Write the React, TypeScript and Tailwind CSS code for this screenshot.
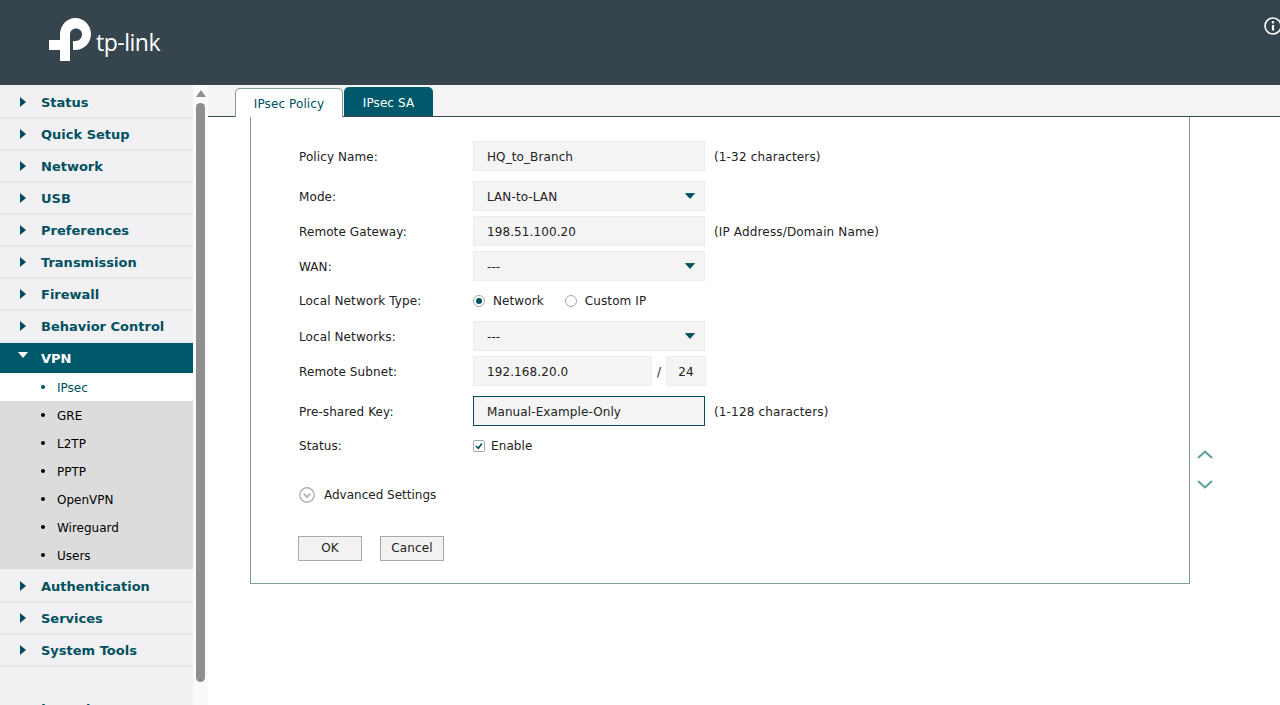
const navTop = ["Status", "Quick Setup", "Network", "USB", "Preferences", "Transmission", "Firewall", "Behavior Control"];
const navSub = ["GRE", "L2TP", "PPTP", "OpenVPN", "Wireguard", "Users"];
const navBottom = ["Authentication", "Services", "System Tools"];

const Logo = () => (
  <div className="flex items-center ml-[49px]">
    <svg width="43" height="44" viewBox="0 0 43 44" className="shrink-0 mt-[-5px]">
      <path
        fill="#fff"
        fillRule="evenodd"
        d="M11 22V16.5C11 7.4 18 0 26.5 0C35 0 42 7.4 42 16C42 25 35 32 26 32H24V23H26.5C30.5 23 33 20 33 16.5C33 13 30.5 10.5 27 10.5C23.5 10.5 21 13 21 16.5V43H11V32H0V22Z"
      />
    </svg>
    <span className="font-['Open_Sans',sans-serif] text-[23px] leading-none text-white ml-[4px] mt-[-1px] tracking-[-0.5px]">tp-link</span>
  </div>
);

const NavRow = ({ label }: { label: string }) => (
  <div className="h-8 border-b-2 border-[#e9e9ec] flex items-center">
    <svg width="6" height="10" viewBox="0 0 6 10" className="ml-[20px] mr-[15px]">
      <path d="M0 0L6 5L0 10Z" fill="#00505f" />
    </svg>
    <span className="font-bold text-[13px] text-[#00505f] pt-[2px]">{label}</span>
  </div>
);

const SubRow = ({ label, active }: { label: string; active?: boolean }) => (
  <div className={`h-7 flex items-center text-[12px] ${active ? "bg-white text-[#00505f]" : "text-black"}`}>
    <span className={`w-1 h-1 rounded-full ml-[41px] mr-3 ${active ? "bg-[#00505f]" : "bg-black"}`} />
    <span className="pt-[2px]">{label}</span>
  </div>
);

const Sidebar = () => (
  <aside className="w-[193px] shrink-0 bg-[#f1f1f4] pt-[2px] overflow-hidden font-['DejaVu_Sans',sans-serif]">
    {navTop.map((n) => (
      <NavRow key={n} label={n} />
    ))}
    <div className="h-[30px] bg-[#00596b] flex items-center">
      <svg width="10" height="6" viewBox="0 0 10 6" className="ml-[18px] mr-[13px] mb-[6px]">
        <path d="M0 0H10L5 6Z" fill="#fff" />
      </svg>
      <span className="font-bold text-[13px] text-white pt-[2px]">VPN</span>
    </div>
    <SubRow label="IPsec" active />
    <div className="bg-[#dcdcdc] mb-[2px]">
      {navSub.map((n) => (
        <SubRow key={n} label={n} />
      ))}
    </div>
    {navBottom.map((n) => (
      <NavRow key={n} label={n} />
    ))}
    <div className="mt-[32px] pl-[41px] font-bold text-[13px] text-[#00505f]">Logout</div>
  </aside>
);

const Scrollbar = () => (
  <div className="w-[15px] shrink-0 bg-[#fafafa] flex flex-col items-center">
    <svg width="10" height="7" viewBox="0 0 10 7" className="mt-[5px] mb-[6px]">
      <path d="M0 7L5 0L10 7Z" fill="#8f8f8f" />
    </svg>
    <div className="w-[9px] h-[579px] rounded-full bg-[#8f8f8f]" />
  </div>
);

const Label = ({ children }: { children: string }) => <div className="w-[174px] shrink-0 pt-[2px]">{children}</div>;

const Field = ({ value, className = "w-[232px]" }: { value: string; className?: string }) => (
  <div className={`h-[30px] bg-[#f4f4f4] border border-[#ececec] flex items-center pl-[13px] ${className}`}>
    <span className="pt-[2px]">{value}</span>
  </div>
);

const Select = ({ value }: { value: string }) => (
  <div className="w-[232px] h-[30px] bg-[#f4f4f4] border border-[#ececec] flex items-center justify-between pl-[13px] pr-[9px]">
    <span className="pt-[2px]">{value}</span>
    <svg width="10" height="6" viewBox="0 0 10 6">
      <path d="M0.5 0.5H9.5L5 5.5Z" fill="#00505f" stroke="#00505f" strokeWidth="0.8" strokeLinejoin="round" />
    </svg>
  </div>
);

const Hint = ({ children }: { children: string }) => <span className="ml-[9px] pt-[2px] tracking-[0.15px]">{children}</span>;

const Radio = ({ checked }: { checked?: boolean }) => (
  <span className={`w-3 h-3 rounded-full border flex items-center justify-center ${checked ? "border-[#9aa9ad]" : "border-[#a8a8a8]"}`}>
    {checked && <span className="w-[6px] h-[6px] rounded-full bg-[#00505f]" />}
  </span>
);

const Form = () => (
  <div className="w-[940px] h-[467px] border border-t-0 border-[#7f9ca3] pl-[48px] pt-[24px] text-[12px] tracking-[0.1px] text-[#222] font-['DejaVu_Sans',sans-serif]">
    <div className="flex items-center">
      <Label>Policy Name:</Label>
      <Field value="HQ_to_Branch" />
      <Hint>(1-32 characters)</Hint>
    </div>
    <div className="flex items-center mt-[10px]">
      <Label>Mode:</Label>
      <Select value="LAN-to-LAN" />
    </div>
    <div className="flex items-center mt-[5px]">
      <Label>Remote Gateway:</Label>
      <Field value="198.51.100.20" />
      <Hint>(IP Address/Domain Name)</Hint>
    </div>
    <div className="flex items-center mt-[5px]">
      <Label>WAN:</Label>
      <Select value="---" />
    </div>
    <div className="flex items-center h-[30px] mt-[5px]">
      <div className="w-[174px] shrink-0">Local Network Type:</div>
      <Radio checked />
      <span className="ml-[8px]">Network</span>
      <span className="ml-[21px]">
        <Radio />
      </span>
      <span className="ml-[8px]">Custom IP</span>
    </div>
    <div className="flex items-center mt-[5px]">
      <Label>Local Networks:</Label>
      <Select value="---" />
    </div>
    <div className="flex items-center mt-[5px]">
      <Label>Remote Subnet:</Label>
      <Field value="192.168.20.0" className="w-[179px]" />
      <span className="w-[14px] text-center pt-[2px]">/</span>
      <div className="w-[40px] h-[30px] bg-[#f4f4f4] border border-[#ececec] flex items-center justify-center pt-[2px]">24</div>
    </div>
    <div className="flex items-center mt-[10px]">
      <Label>Pre-shared Key:</Label>
      <Field value="Manual-Example-Only" className="w-[232px] !border-[#00505f]" />
      <Hint>(1-128 characters)</Hint>
    </div>
    <div className="flex items-center mt-[10px] h-[20px]">
      <div className="w-[174px] shrink-0">Status:</div>
      <span className="w-3 h-3 border border-[#9aa9ad] rounded-[2px] flex items-center justify-center">
        <svg width="8" height="8" viewBox="0 0 8 8">
          <path d="M1 4L3.2 6.2L7 1.5" stroke="#00505f" strokeWidth="1.6" fill="none" />
        </svg>
      </span>
      <span className="ml-[6px]">Enable</span>
    </div>
    <div className="flex items-center mt-[29px]">
      <svg width="16" height="16" viewBox="0 0 16 16">
        <circle cx="8" cy="8" r="7.2" fill="none" stroke="#b0b0b0" strokeWidth="1.4" />
        <path d="M4.8 6.8L8 10L11.2 6.8" fill="none" stroke="#b8b8b8" strokeWidth="2" />
      </svg>
      <span className="ml-[9px] pt-[1px] tracking-normal">Advanced Settings</span>
    </div>
    <div className="flex mt-[32px] gap-[18px] ml-[-1px]">
      <button className="w-[64px] h-[25px] bg-[#f2f2f2] border border-[#a9a9a9] text-[12px] text-[#222] pb-[2px]">OK</button>
      <button className="w-[64px] h-[25px] bg-[#f2f2f2] border border-[#a9a9a9] text-[12px] text-[#222] pb-[2px]">Cancel</button>
    </div>
  </div>
);

const Tabs = () => (
  <div className="h-8 bg-[#f4f4f4] border-b border-[#37474f] flex items-end pl-[27px] gap-[1px] font-['DejaVu_Sans',sans-serif] text-[12px] tracking-[0.1px]">
    <div className="w-[108px] h-[29px] bg-white border border-b-0 border-[#7f9ca3] rounded-t-[5px] flex items-center justify-center text-[#00505f] mb-[-1px] pt-[2px]">IPsec Policy</div>
    <div className="w-[89px] h-[29px] bg-[#00596b] rounded-t-[5px] flex items-center justify-center text-white pt-[2px]">IPsec SA</div>
  </div>
);

export default function App() {
  return (
    <div className="w-[1280px] h-[705px] overflow-hidden flex flex-col bg-white">
      <header className="h-[85px] shrink-0 bg-[#36454d] flex items-center justify-between">
        <Logo />
        <svg width="18" height="18" viewBox="0 0 18 18" className="mr-[-2px] mb-[33px]">
          <circle cx="9" cy="9" r="8" fill="none" stroke="#fff" strokeWidth="1.6" />
          <circle cx="9" cy="5.2" r="1.2" fill="#fff" />
          <path d="M9 8V13.5" stroke="#fff" strokeWidth="2.2" />
        </svg>
      </header>
      <div className="flex-1 flex min-h-0">
        <Sidebar />
        <Scrollbar />
        <main className="flex-1 min-w-0">
          <Tabs />
          <div className="flex">
            <div className="ml-[42px]">
              <Form />
            </div>
            <div className="ml-[7px] mt-[333px] flex flex-col gap-[21px]">
              <svg width="16" height="9" viewBox="0 0 16 9">
                <path d="M1 8L8 1.5L15 8" fill="none" stroke="#5f9c9c" strokeWidth="2" />
              </svg>
              <svg width="16" height="9" viewBox="0 0 16 9">
                <path d="M1 1L8 7.5L15 1" fill="none" stroke="#5f9c9c" strokeWidth="2" />
              </svg>
            </div>
          </div>
        </main>
      </div>
    </div>
  );
}
